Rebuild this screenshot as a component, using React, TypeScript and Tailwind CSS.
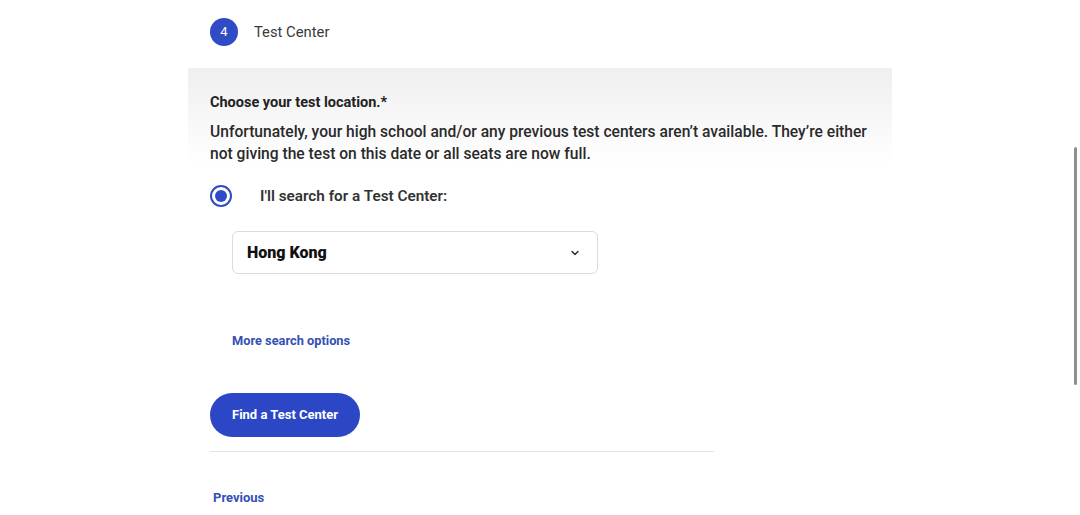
import React from 'react';
import { ChevronDown } from 'lucide-react';

export default function App() {
  return (
    <div className="relative w-[1080px] h-[515px] overflow-hidden bg-white font-['Roboto',sans-serif] text-[#333]">
      {/* step header */}
      <div className="flex items-start gap-[16px] pl-[210px] pt-[18px] h-[68px]">
        <div className="w-[28px] h-[28px] rounded-full bg-[#2f4bc5] text-white text-[13px] flex items-center justify-center">4</div>
        <span className="text-[14.8px] leading-[28px] text-[#3a3a3a]">Test Center</span>
      </div>

      {/* notice band */}
      <div className="ml-[188px] w-[704px] h-[97px] bg-gradient-to-b from-[#efefef] to-white pl-[22px] pt-[26px]">
        <p className="text-[14.5px] font-bold leading-[18px] text-[#222]">Choose your test location.*</p>
        <p className="mt-[9px] text-[15.6px] font-medium leading-[22px] text-[#2a2a2a]">
          Unfortunately, your high school and/or any previous test centers aren’t available. They’re either
          <br />
          not giving the test on this date or all seats are now full.
        </p>
      </div>

      <div className="pl-[210px]">
        <label className="flex items-center mt-[20px] h-[22px]">
          <span className="w-[22px] h-[22px] rounded-full border-[2.5px] border-[#2f4bc5] flex items-center justify-center">
            <span className="w-[12px] h-[12px] rounded-full bg-[#2f4bc5]" />
          </span>
          <span className="ml-[28px] text-[15.3px] font-semibold text-[#333]">I'll search for a Test Center:</span>
        </label>

        <div className="ml-[22px] mt-[24px] w-[366px] h-[43px] border border-[#dcdcdc] rounded-[6px] flex items-center justify-between pl-[14px] pr-[16px]">
          <span className="text-[16px] font-black text-[#111]">Hong Kong</span>
          <ChevronDown className="w-[12px] h-[12px] text-[#333]" strokeWidth={3} />
        </div>

        <a className="block ml-[22px] mt-[59px] text-[12.8px] font-bold text-[#3450b5] leading-[16px]">More search options</a>

        <button className="mt-[44px] h-[44px] px-[22px] rounded-full bg-[#2c47c5] text-white text-[13px] font-bold">Find a Test Center</button>

        <div className="mt-[14px] w-[504px] border-t border-[#e3e3e3]" />

        <a className="block ml-[3px] mt-[38px] text-[13px] font-bold text-[#3450b5] leading-[16px]">Previous</a>
      </div>

      {/* scroll indicator */}
      <div className="absolute left-[1074px] top-[147px] w-[3px] h-[238px] rounded-full bg-[#8f8f8f]" />
    </div>
  );
}
